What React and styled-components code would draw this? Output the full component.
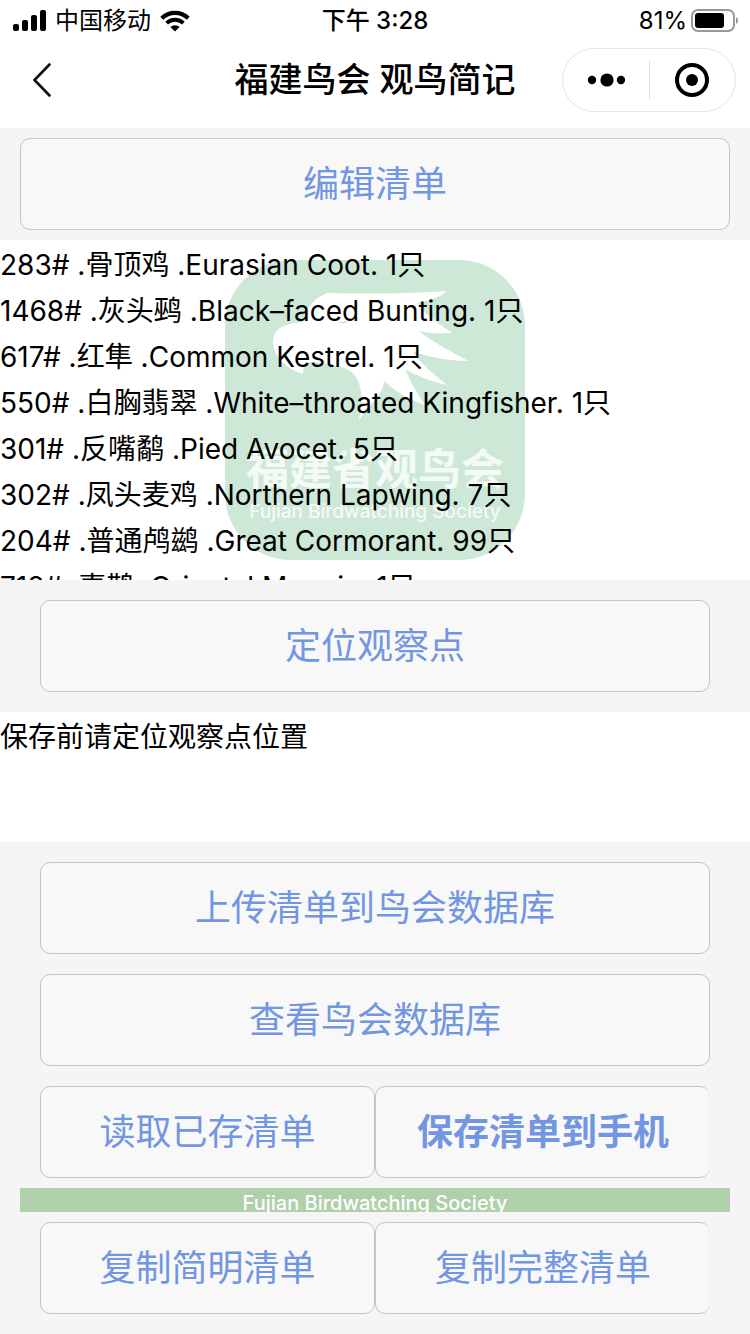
import React from 'react';
import styled, { createGlobalStyle } from 'styled-components';

const GlobalStyle = createGlobalStyle`
  * {
    box-sizing: border-box;
  }
  body {
    margin: 0;
    background-color: #f5f5f5;
    color: #000;
    font-family: Inter, 'Noto Sans CJK SC', sans-serif;
  }
`;

const records = [
  { id: 283, name: '骨顶鸡', english: 'Eurasian Coot', count: 1 },
  { id: 1468, name: '灰头鹀', english: 'Black–faced Bunting', count: 1 },
  { id: 617, name: '红隼', english: 'Common Kestrel', count: 1 },
  { id: 550, name: '白胸翡翠', english: 'White–throated Kingfisher', count: 1 },
  { id: 301, name: '反嘴鹬', english: 'Pied Avocet', count: 5 },
  { id: 302, name: '凤头麦鸡', english: 'Northern Lapwing', count: 7 },
  { id: 204, name: '普通鸬鹚', english: 'Great Cormorant', count: 99 },
  { id: 718, name: '喜鹊', english: 'Oriental Magpie', count: 1 },
];

function StatusBar() {
  return (
    <StatusDiv>
      <CarrierDiv>
        <svg width="34" height="22" viewBox="0 0 34 22">
          <rect x="1" y="14" width="6" height="7" rx="2" />
          <rect x="10" y="10" width="6" height="11" rx="2" />
          <rect x="19" y="5" width="6" height="16" rx="2" />
          <rect x="28" y="0" width="6" height="21" rx="2" />
        </svg>
        <span>中国移动</span>
        <svg width="30" height="22" viewBox="0 0 30 22">
          <path d="M1.8 8.2a19 19 0 0 1 26.4 0" fill="none" stroke="#000" strokeWidth="4.2" />
          <path d="M6.6 13.2a12 12 0 0 1 16.8 0" fill="none" stroke="#000" strokeWidth="3.8" />
          <path d="M15 21.4l-4.6-4.4a6.6 6.6 0 0 1 9.2 0z" />
        </svg>
      </CarrierDiv>
      <ClockDiv>下午 3:28</ClockDiv>
      <BatteryDiv>
        <span>81%</span>
        <svg width="48" height="24" viewBox="0 0 48 24">
          <rect x="2" y="1" width="42" height="21" rx="6" fill="none" stroke="#999" strokeWidth="2" />
          <rect x="5" y="4" width="29" height="15" rx="3" />
          <path d="M46 8a4 4 0 0 1 0 7z" fill="#999" />
        </svg>
      </BatteryDiv>
    </StatusDiv>
  );
}

function NavBar() {
  return (
    <NavHeader>
      <BackButton aria-label="返回">
        <svg width="20" height="34" viewBox="0 0 20 34">
          <path d="M17.5 1.5L2.5 17l15 15.5" fill="none" stroke="#111" strokeWidth="2.6" strokeLinecap="round" strokeLinejoin="round" />
        </svg>
      </BackButton>
      <Title>福建鸟会 观鸟简记</Title>
      <CapsuleDiv>
        <CapsuleButton aria-label="更多">
          <svg width="40" height="16" viewBox="0 0 40 16">
            <circle cx="6" cy="8" r="4.2" />
            <circle cx="21" cy="8" r="6.6" />
            <circle cx="35" cy="8" r="4.2" />
          </svg>
        </CapsuleButton>
        <CapsuleButton aria-label="关闭">
          <svg width="34" height="34" viewBox="0 0 34 34">
            <circle cx="17" cy="17" r="15" fill="none" stroke="#000" strokeWidth="4" />
            <circle cx="17" cy="17" r="6" />
          </svg>
        </CapsuleButton>
      </CapsuleDiv>
    </NavHeader>
  );
}

function Watermark() {
  return (
    <WatermarkSvg viewBox="0 0 300 300">
      <rect width="300" height="300" rx="66" fill="#cde8d7" />
      <path
        fill="#fff"
        d="M103 33C140 34 180 34 222 31C214 38 203 41 192 43C203 57 215 65 228 73C214 74 203 73 194 71
           C210 84 226 91 243 101C224 101 206 97 188 92C198 106 209 114 222 125C205 121 192 116 180 109
           C186 123 192 133 200 145C182 139 169 130 159 121C158 136 143 145 134 161C135 152 138 143 136 132
           C134 118 128 110 116 107C104 104 92 102 85 102C80 105 78 109 78 114C63 109 49 99 48 82
           C49 66 62 64 77 62C82 50 88 37 103 33Z"
      />
      <path d="M111 61q7 3 12-1q-3 6-12 1z" fill="#bcd6c8" />
      <LogoName x="150" y="225">福建省观鸟会</LogoName>
      <LogoCaption x="150" y="258">Fujian Birdwatching Society</LogoCaption>
    </WatermarkSvg>
  );
}

export default function App() {
  return (
    <PageDiv>
      <GlobalStyle />
      <StatusBar />
      <NavBar />
      <EditSection>
        <Button>编辑清单</Button>
      </EditSection>
      <ListSection>
        <Watermark />
        <RecordList>
          {records.map((r) => (
            <li key={r.id}>
              {r.id}# .{r.name} .{r.english}. {r.count}只
            </li>
          ))}
        </RecordList>
      </ListSection>
      <ButtonSection>
        <Button>定位观察点</Button>
      </ButtonSection>
      <NoteSection>保存前请定位观察点位置</NoteSection>
      <ButtonSection>
        <Button>上传清单到鸟会数据库</Button>
        <Button>查看鸟会数据库</Button>
        <ButtonRow>
          <Button>读取已存清单</Button>
          <Button $bold $open>保存清单到手机</Button>
        </ButtonRow>
      </ButtonSection>
      <Banner>Fujian Birdwatching Society</Banner>
      <FooterSection>
        <ButtonRow>
          <Button>复制简明清单</Button>
          <Button $open>复制完整清单</Button>
        </ButtonRow>
      </FooterSection>
    </PageDiv>
  );
}

const PageDiv = styled.div`
  display: flex;
  flex-direction: column;
`;

const StatusDiv = styled.div`
  display: grid;
  grid-template-columns: 1fr auto 1fr;
  align-items: center;
  height: 40px;
  padding: 2px 12px 0;
  background-color: #fff;
  font-size: 24px;
  line-height: 38px;
`;

const CarrierDiv = styled.div`
  display: flex;
  align-items: center;
  gap: 9px;
`;

const ClockDiv = styled.div`
  font-weight: 500;
`;

const BatteryDiv = styled.div`
  display: flex;
  align-items: center;
  justify-content: flex-end;
  gap: 3px;
`;

const NavHeader = styled.header`
  display: grid;
  grid-template-columns: 1fr auto 1fr;
  align-items: center;
  height: 88px;
  padding: 0 14px 8px;
  background-color: #fff;
`;

const BackButton = styled.button`
  display: flex;
  justify-self: start;
  padding: 10px 18px;
  border: 0;
  background: none;
`;

const Title = styled.h1`
  margin: 0;
  font-size: 34px;
  font-weight: 500;
  line-height: 48px;
`;

const CapsuleDiv = styled.div`
  display: flex;
  justify-self: end;
  align-items: center;
  width: 174px;
  height: 64px;
  border: 1px solid #e6e6e6;
  border-radius: 32px;
`;

const CapsuleButton = styled.button`
  display: flex;
  flex: 1;
  align-items: center;
  justify-content: center;
  height: 38px;
  padding: 0;
  border: 0;
  background: none;

  & + & {
    border-left: 1px solid #d9d9d9;
  }
`;

const Button = styled.button`
  flex: 1 1 0;
  min-height: 92px;
  padding: 0;
  border: 1px solid #c4c4c4;
  border-right-width: ${(props) => (props.$open ? 0 : '1px')};
  border-radius: 10px;
  background-color: #f8f8f8;
  color: #7296e2;
  font-family: inherit;
  font-size: 36px;
  font-weight: ${(props) => (props.$bold ? 700 : 400)};
  line-height: 90px;
`;

const EditSection = styled.section`
  display: flex;
  padding: 10px 20px;
`;

const ListSection = styled.section`
  position: relative;
  height: 340px;
  overflow: hidden;
  background-color: #fff;
`;

const WatermarkSvg = styled.svg`
  position: absolute;
  top: 20px;
  left: calc(50% - 150px);
  width: 300px;
  height: 300px;
`;

const LogoName = styled.text`
  fill: #f4fbf6;
  font-size: 43px;
  font-weight: 700;
  text-anchor: middle;
`;

const LogoCaption = styled.text`
  fill: #f4fbf6;
  font-size: 19px;
  font-weight: 500;
  text-anchor: middle;
`;

const RecordList = styled.ul`
  position: relative;
  margin: 0;
  padding: 2px 0 0;
  list-style: none;
  font-size: 28px;
  line-height: 46px;
  white-space: nowrap;
`;

const ButtonSection = styled.section`
  display: flex;
  flex-direction: column;
  gap: 20px;
  padding: 20px 40px;
`;

const ButtonRow = styled.div`
  display: grid;
  grid-template-columns: 1fr 1fr;
`;

const NoteSection = styled.section`
  min-height: 130px;
  padding-top: 2px;
  background-color: #fff;
  font-size: 28px;
  line-height: 46px;
`;

const Banner = styled.div`
  height: 24px;
  margin: -10px 20px 10px;
  overflow: hidden;
  background-color: #afd0ab;
  color: #fff;
  font-size: 20px;
  font-weight: 500;
  line-height: 30px;
  text-align: center;
`;

const FooterSection = styled.section`
  padding: 0 40px 20px;
`;
